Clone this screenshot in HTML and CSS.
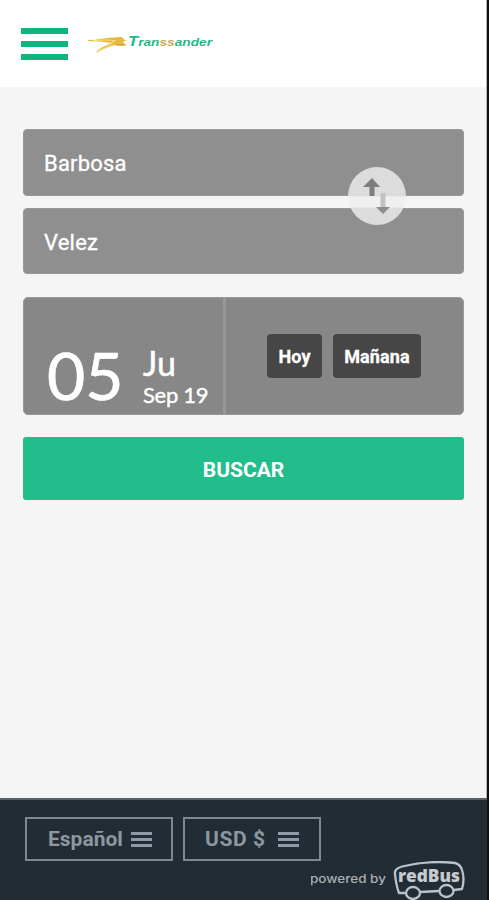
FILE: index.html
```html
<!DOCTYPE html>
<html lang="es">
<head>
<meta charset="utf-8">
<title>Transsander</title>
<link rel="stylesheet" href="styles.css">
</head>
<body>
<div class="app">
  <header class="header">
    <div class="menu"><i></i><i></i><i></i></div>
    <svg class="logo" width="132" height="24" viewBox="0 0 132 24">
      <path d="M0 9Q2 7 8 8Q16 6 27 5.500L33 5Q37 5 37 8L40 8 36 10 39 13Q32 15 28 13Q17 16 9 21Q11 17 18 14L25 11Q13 9 0 9Z" fill="#e6b93c"/>
      <path d="M6 8.500Q18 7.500 28 8.500L24 11M12 18.500L26 12.500" stroke="#f7dc83" stroke-width="1.100" fill="none"/>
      <path d="M29 12.500L39 13" stroke="#cf9a32" stroke-width=".8" fill="none"/>
      <text class="brand" x="41" y="13.500" textLength="84" lengthAdjust="spacingAndGlyphs"><tspan class="initial">T</tspan>ran<tspan fill="#c9a24b">ss</tspan>ander</text>
    </svg>
  </header>
  <main class="main">
    <div class="places">
      <div class="field">Barbosa</div>
      <div class="field">Velez</div>
      <div class="swap">
        <svg width="58" height="58" viewBox="0 0 58 58">
          <path d="M24 11L32 20H26.500V29H21.500V20H15Z" fill="#7d7d7d"/>
          <path d="M32.500 26H37.500V40H32.500Z" fill="#c2c2c2"/>
          <path d="M28 40H42L35 47Z" fill="#8c8c8c"/>
        </svg>
      </div>
    </div>
    <div class="date">
      <div class="picked">
        <span class="day">05</span>
        <div class="rest"><span class="weekday">Ju</span><span class="month">Sep 19</span></div>
      </div>
      <div class="quick"><span class="chip today">Hoy</span><span class="chip tomorrow">Mañana</span></div>
    </div>
    <div class="search">BUSCAR</div>
  </main>
  <footer class="footer">
    <div class="selects">
      <div class="select lang"><span>Español</span><b class="lines"><i></i><i></i><i></i></b></div>
      <div class="select money"><span>USD $</span><b class="lines"><i></i><i></i><i></i></b></div>
    </div>
    <svg class="powered" width="156" height="39" viewBox="0 0 156 39">
      <g fill="none" stroke="#bcc3c8" stroke-width="2.300" stroke-linejoin="round">
        <path d="M95 32L88 32Q85 24 84 13Q83 8 91 5.500Q117 -1 144 2Q149 3 151 9Q154 18 151 28L143 29M109 31L128 30"/>
        <ellipse cx="102" cy="32" rx="7" ry="6"/>
        <ellipse cx="135.500" cy="30" rx="7" ry="6"/>
      </g>
      <text class="by" x="-1" y="21.500" textLength="76" lengthAdjust="spacingAndGlyphs">powered by</text>
      <text class="redbus" x="87" y="21" textLength="62" lengthAdjust="spacingAndGlyphs">redBus</text>
    </svg>
  </footer>
</div>
</body>
</html>
```
FILE: styles.css
```css
* { box-sizing: border-box; }
body { margin: 0; background: #111; font-family: Roboto, "Liberation Sans", sans-serif; }
.app { width: 487px; height: 900px; display: flex; flex-direction: column; background: #f5f5f5; border-right: 1px solid #b5b5b5; }
.header { height: 87px; background: #fff; display: flex; align-items: flex-start; padding: 28px 21px; gap: 19px; }
.menu { width: 47px; display: flex; flex-direction: column; gap: 6.500px; }
.menu i { height: 6.300px; background: #0fb67b; }
.logo { margin-top: 4px; }
.brand { font: italic 700 11.500px "Liberation Sans", sans-serif; fill: #27b78a; }
.initial { font-size: 14px; }
.main { flex: 1; padding: 42px 22px 0 23px; }
.places { position: relative; display: flex; flex-direction: column; gap: 12px; }
.field { height: 66.500px; border-radius: 4px; background: #8f8f8f; border: 1px solid #989898; color: #fff; padding: 3px 20px 0; display: flex; align-items: center; font-size: 22px; letter-spacing: .2px; -webkit-text-stroke: .3px #fff; }
.swap { position: absolute; left: 325px; top: 38px; width: 58px; height: 58px; border-radius: 50%; background: linear-gradient(#dcdcdc 0 49%, #f0f0f0 52% 68%, #dcdcdc 72%); }
.swap svg { display: block; }
.date { margin-top: 23px; height: 118px; border-radius: 5px; background: #878787; border: 1px solid #999; color: #fff; display: flex; font-family: Lato, sans-serif; }
.picked { width: 201.500px; border-right: 3px solid #989898; display: flex; padding: 40px 0 0 23px; }
.day { font-size: 66px; line-height: 74px; width: 96px; -webkit-text-stroke: .7px #fff; }
.rest { display: flex; flex-direction: column; padding-top: 5px; white-space: nowrap; }
.weekday { font-size: 34px; line-height: 40px; -webkit-text-stroke: .5px #fff; }
.month { font-size: 22px; line-height: 24px; letter-spacing: -.3px; -webkit-text-stroke: .4px #fff; }
.quick { display: flex; align-items: center; gap: 11px; padding-left: 41.500px; font-family: Roboto, sans-serif; }
.chip { height: 44px; border-radius: 4px; background: #464646; display: flex; align-items: center; justify-content: center; font-size: 18px; font-weight: 700; letter-spacing: .15px; -webkit-text-stroke: .3px #fff; }
.today { width: 55px; }
.tomorrow { width: 88px; }
.search { margin-top: 22px; height: 63px; border-radius: 3px; background: #21bd8a; color: #fff; display: flex; align-items: center; justify-content: center; font-size: 21px; font-weight: 700; padding-top: 2px; }
.footer { height: 102px; margin-right: -1px; background: #222c35; border-top: 2px solid #596066; padding: 17px 20px 0 25px; display: flex; flex-direction: column; }
.selects { display: flex; gap: 10px; }
.select { height: 44px; border: 2px solid #7d8990; color: #8d979e; display: flex; align-items: center; font-size: 21px; font-weight: 700; }
.lang { width: 148px; padding-left: 21px; gap: 8px; }
.money { width: 138px; padding-left: 20px; gap: 12px; letter-spacing: .6px; }
.lines { width: 21px; display: flex; flex-direction: column; gap: 3px; }
.lines i { height: 3px; background: #9298a7; }
.powered { align-self: flex-end; }
.by { font: 500 12px Inter, sans-serif; fill: #aab1b6; }
.redbus { font: 800 18px "Open Sans", sans-serif; fill: #c5cbcf; }
```
